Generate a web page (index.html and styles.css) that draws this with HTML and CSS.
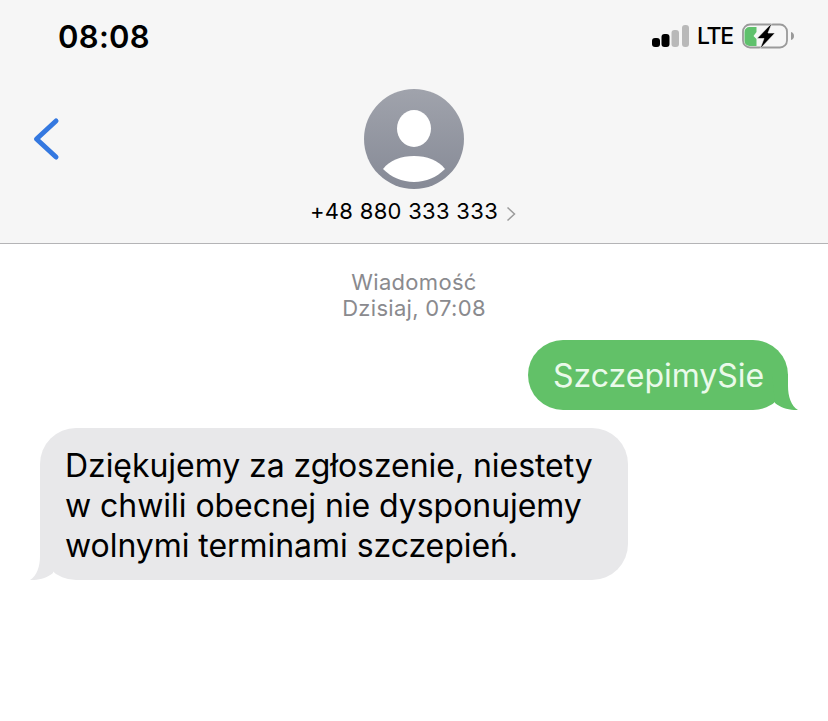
FILE: index.html
```html
<!DOCTYPE html>
<html lang="pl">
<head>
<meta charset="utf-8">
<title>Wiadomość</title>
<link rel="stylesheet" href="styles.css">
</head>
<body>
<header class="header">
  <div class="status">
    <span class="time">08:08</span>
    <div class="indicators">
      <svg class="signal" width="37" height="22" viewBox="0 0 37 22"><rect x="0" y="13" width="8" height="9" rx="3" fill="#000"/><rect x="9.500" y="9" width="8" height="13" rx="3" fill="#000"/><rect x="19.500" y="5" width="7.500" height="17" rx="3" fill="#b9b9b9"/><rect x="30" y="0" width="7" height="22" rx="3" fill="#b9b9b9"/></svg>
      <span class="lte">LTE</span>
      <svg class="battery" width="53" height="26" viewBox="0 0 53 26"><rect x="1" y="1.500" width="44" height="23" rx="7" fill="none" stroke="#9a9a9a" stroke-width="1.800"/><path d="M2.500 9a5 5 0 0 1 5-5h7v5l-3 4 3 3v7h-7a5 5 0 0 1-5-5z" fill="#5fc16c"/><path d="M49 9c2 .6 3 2 3 4s-1 3.400-3 4z" fill="#9a9a9a"/><path d="M30 0 L15 15.500 H22 L18 26 L33 10 H26 Z" fill="#000" stroke="#f6f6f6" stroke-width="0.600"/></svg>
    </div>
  </div>
  <div class="nav">
    <svg class="back" width="28" height="46" viewBox="0 0 28 46"><path d="M24 5 L4.500 23 L24 41" fill="none" stroke="#3478e0" stroke-width="5" stroke-linecap="round" stroke-linejoin="round"/></svg>
    <div class="contact">
      <svg class="avatar" width="100" height="100" viewBox="0 0 100 100">
        <defs>
          <linearGradient id="ag" x1="0" y1="0" x2="0" y2="1"><stop offset="0" stop-color="#a0a3ac"/><stop offset="1" stop-color="#868a96"/></linearGradient>
        </defs>
        <circle cx="50" cy="50" r="50" fill="url(#ag)"/>
        <ellipse cx="50" cy="39.500" rx="17" ry="18.500" fill="#fff"/>
        <path d="M19 80 C26 71 37 67 50 67 C63 67 74 71 81 80 C73 88 62 93 50 93 C38 93 27 88 19 80 Z" fill="#fff"/>
      </svg>
      <div class="number">
        <span>+48 880 333 333</span>
        <svg class="chev" width="10" height="16" viewBox="0 0 10 16"><path d="M1.500 1.500 L8.500 8 L1.500 14.500" fill="none" stroke="#9b9b9b" stroke-width="1.500"/></svg>
      </div>
    </div>
  </div>
</header>
<main class="thread">
  <div class="meta">
    <div>Wiadomość</div>
    <div>Dzisiaj, 07:08</div>
  </div>
  <div class="bubble sent">SzczepimySie
    <svg class="tail tail-sent" width="26" height="36" viewBox="0 0 26 36"><path d="M0 0 H16 V12 C16 22 19 32 26 36 C18 36.500 9 34 3 29 Z" fill="#62c168"/></svg>
  </div>
  <div class="bubble received">Dziękujemy za zgłoszenie, niestety<br>w chwili obecnej nie dysponujemy<br>wolnymi terminami szczepień.
    <svg class="tail tail-received" width="26" height="36" viewBox="0 0 26 36"><path d="M26 0 H10 V12 C10 22 7 32 0 36 C8 36.500 17 34 23 29 Z" fill="#e8e8ea"/></svg>
  </div>
</main>
</body>
</html>
```

FILE: styles.css
```css
* { box-sizing: border-box; }
html, body { margin: 0; padding: 0; }
body {
  width: 828px;
  height: 721px;
  overflow: hidden;
  background: #fff;
  font-family: Inter, "Liberation Sans", sans-serif;
  color: #000;
}
.header {
  height: 244px;
  background: #f6f6f6;
  border-bottom: 1px solid #b4b4b6;
  display: flex;
  flex-direction: column;
}
.status {
  height: 89px;
  padding: 18px 33px 0 58px;
  display: flex;
  justify-content: space-between;
  align-items: flex-start;
}
.time { font-size: 31px; line-height: 38px; font-weight: 600; letter-spacing: 0.3px; }
.indicators { display: flex; align-items: center; gap: 8px; padding-top: 5px; }
.signal { display: block; }
.lte { font-size: 23px; line-height: 26px; font-weight: 500; letter-spacing: -1.200px; }
.battery { display: block; margin-left: 1px; }
.nav { position: relative; flex: 1; display: flex; justify-content: center; }
.back { position: absolute; left: 32px; top: 27px; }
.contact { display: flex; flex-direction: column; align-items: center; }
.avatar { display: block; }
.number {
  margin-top: 9px;
  margin-left: -2px;
  display: flex;
  align-items: center;
  gap: 8px;
  font-size: 22px;
  line-height: 26px;
  letter-spacing: 0.3px;
}
.chev { margin-top: 5px; }
.thread { display: flex; flex-direction: column; padding: 25px 40px 0; }
.meta {
  text-align: center;
  font-size: 22px;
  line-height: 26px;
  font-weight: 400;
  color: #8a8a8e;
  letter-spacing: 0.3px;
}
.bubble { position: relative; font-size: 32px; }
.sent {
  align-self: flex-end;
  margin-top: 19px;
  width: 260px;
  height: 70px;
  padding: 0 25px;
  line-height: 72px;
  background: #62c168;
  color: #eafaea;
  border-radius: 35px;
}
.received {
  align-self: flex-start;
  margin-top: 18px;
  width: 588px;
  height: 152px;
  padding: 18px 25px;
  line-height: 40px;
  letter-spacing: -0.050px;
  background: #e8e8ea;
  border-radius: 36px;
}
.tail { position: absolute; bottom: 0; }
.tail-sent { right: -10px; }
.tail-received { left: -10px; }
```
